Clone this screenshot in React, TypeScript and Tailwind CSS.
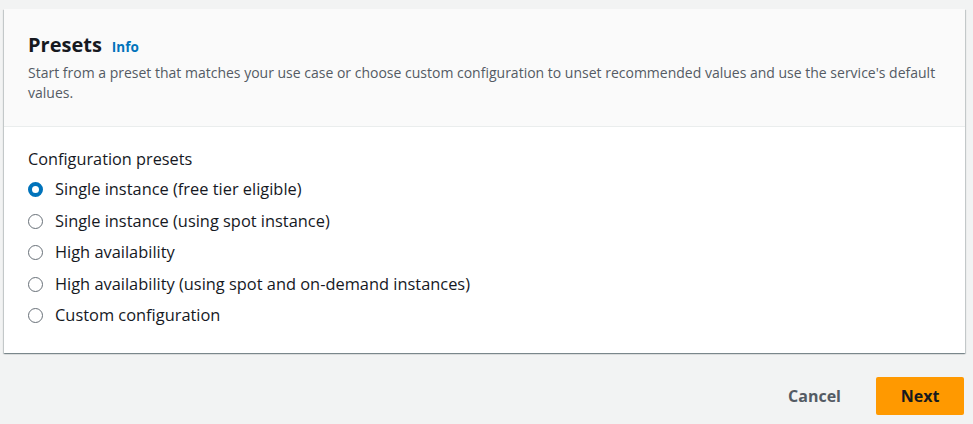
const presets = [
  'Single instance (free tier eligible)',
  'Single instance (using spot instance)',
  'High availability',
  'High availability (using spot and on-demand instances)',
  'Custom configuration',
];

function Radio({ checked }: { checked: boolean }) {
  if (checked) {
    return <span className="w-[15px] h-[15px] rounded-full border-[4px] border-[#0073bb] bg-white shrink-0" />;
  }
  return <span className="w-[15px] h-[15px] rounded-full border-[1.5px] border-[#687078] bg-white shrink-0" />;
}

export default function App() {
  return (
    <div className="w-[973px] h-[424px] bg-[#f2f3f3] pt-[9px] pl-[4px] pr-[8px] font-['Open_Sans',sans-serif] text-[#16191f] overflow-hidden">
      <div className="bg-white shadow-[0_1px_1px_0_rgba(0,28,36,0.3),1px_1px_1px_0_rgba(0,28,36,0.15),-1px_1px_1px_0_rgba(0,28,36,0.15)]">
        <div className="h-[118px] bg-[#fafafa] border-b border-[#eaeded] px-[24px] pt-[24px]">
          <div className="flex items-baseline gap-[10px]">
            <h2 className="text-[20px] font-bold leading-[24px]">Presets</h2>
            <a className="text-[13.5px] font-bold text-[#0073bb]">Info</a>
          </div>
          <p className="text-[14px] leading-[20px] text-[#545b64] mt-[6px]">
            Start from a preset that matches your use case or choose custom configuration to unset recommended values and use the service's default values.
          </p>
        </div>
        <div className="px-[24px] pt-[21px] pb-[21px]">
          <div className="text-[16.3px] leading-[22px] mb-[4px]">Configuration presets</div>
          <div className="flex flex-col">
            {presets.map((p, i) => (
              <label key={p} className="flex items-center gap-[12px] h-[31.5px] text-[16.4px]">
                <Radio checked={i === 0} />
                <span>{p}</span>
              </label>
            ))}
          </div>
        </div>
      </div>
      <div className="flex justify-end items-center gap-[35px] mt-[24px] pr-[1px]">
        <button className="text-[16px] font-bold text-[#545b64]">Cancel</button>
        <button className="w-[88px] h-[38px] rounded-[2px] bg-[#ff9900] text-[16px] font-bold text-[#16191f]">Next</button>
      </div>
    </div>
  );
}
